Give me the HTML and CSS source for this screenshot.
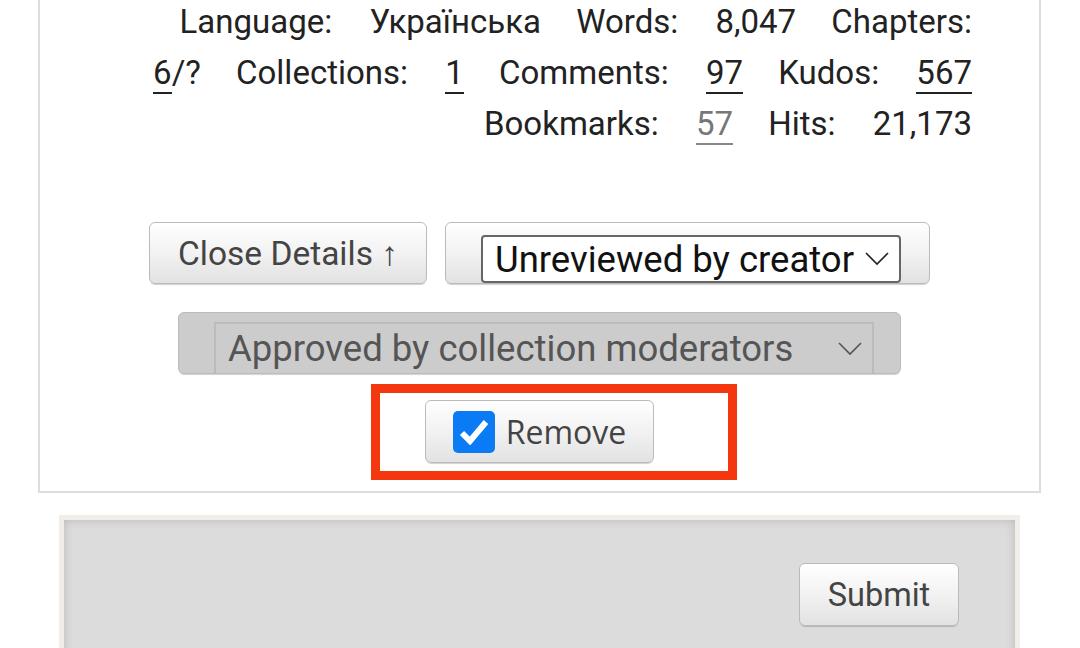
FILE: index.html
```html
<!DOCTYPE html>
<html lang="en">
<head>
  <meta charset="UTF-8">
  <meta name="viewport" content="width=device-width, initial-scale=1.0">
  <title>Approve works</title>
  <link rel="stylesheet" href="styles.css">
</head>
<body>
  <!-- work blurb -->
  <div class="blurb">
    <dl class="stats">
      <dt>Language:</dt> <dd>Українська</dd>
      <dt>Words:</dt> <dd>8,047</dd>
      <dt>Chapters:</dt> <dd><a href="#">6</a>/?</dd>
      <dt>Collections:</dt> <dd><a href="#">1</a></dd>
      <dt>Comments:</dt> <dd><a href="#">97</a></dd>
      <dt>Kudos:</dt> <dd><a href="#">567</a></dd>
      <dt>Bookmarks:</dt> <dd><a href="#" class="muted">57</a></dd>
      <dt>Hits:</dt> <dd>21,173</dd>
    </dl>

    <ul class="actions">
      <li class="row">
        <button class="btn">Close Details ↑</button>
        <div class="btn btn-select">
          <span class="select">
            <select>
              <option>Unreviewed by creator</option>
            </select>
            <svg class="chevron" width="24" height="14" viewBox="0 0 24 14"><path d="M1 1 L12 12 L23 1" fill="none" stroke="#222" stroke-width="1.6"/></svg>
          </span>
        </div>
      </li>
      <li class="row">
        <div class="btn btn-select disabled">
          <span class="select">
            <select disabled>
              <option>Approved by collection moderators</option>
            </select>
            <svg class="chevron" width="24" height="14" viewBox="0 0 24 14"><path d="M1 1 L12 12 L23 1" fill="none" stroke="#555" stroke-width="1.6"/></svg>
          </span>
        </div>
      </li>
      <li class="row">
        <div class="highlight">
          <label class="btn btn-remove">
            <span class="checkbox">
              <svg width="30" height="26" viewBox="0 0 30 26"><path d="M3 14 L11 22 L27 3" fill="none" stroke="#fff" stroke-width="6"/></svg>
            </span>
            Remove
          </label>
        </div>
      </li>
    </ul>
  </div>

  <!-- submit -->
  <div class="submit-box">
    <div class="submit-inner">
      <button class="btn btn-submit">Submit</button>
    </div>
  </div>
</body>
</html>
```

FILE: styles.css
```css
* {
  margin: 0;
  padding: 0;
  box-sizing: border-box;
}

body {
  font-family: Roboto, "Noto Sans", sans-serif;
  background-color: #fff;
  color: #222;
  overflow: hidden;
}

/* 작품 블럽 */
.blurb {
  margin: 0 39px 0 38px;
  border: 2px solid #ddd;
  border-top: none;
  padding: 0 67px 11px 50px;
}

.stats {
  margin-top: -4px;
  text-align: right;
  font-size: 33px;
  line-height: 51px;
}

.stats dt,
.stats dd {
  display: inline;
}

.stats dt {
  margin-left: 27px;
}

.stats dd {
  margin-left: 29px;
}

.stats a {
  color: #222;
  text-decoration: none;
  border-bottom: 2px solid #222;
}

.stats a.muted {
  color: #777;
  border-bottom-color: #888;
}

/* 버튼 영역 */
.actions {
  list-style: none;
  margin: 73px -67px 0 -50px;
}

.row {
  display: flex;
  justify-content: center;
  gap: 18px;
}

.row + .row {
  margin-top: 28px;
}

.row + .row + .row {
  margin-top: 10px;
}

.btn {
  font-family: Roboto, sans-serif;
  font-size: 33.5px;
  color: #444;
  height: 62px;
  padding: 0 28px;
  border: 1px solid #bbb;
  border-radius: 6px;
  background: linear-gradient(#fff 0%, #f2f2f2 50%, #e2e2e2 100%);
  box-shadow: 0 2px 1px -1px rgba(0, 0, 0, 0.18);
  display: flex;
  align-items: center;
}

.btn-select {
  align-items: flex-end;
  padding: 0 28px 0 35px;
}

.select {
  display: flex;
  align-items: center;
  height: 48px;
  background: #fff;
  border: 2px solid #666;
  border-radius: 4px;
  padding: 0 10px 0 12px;
}

.select select {
  appearance: none;
  -webkit-appearance: none;
  border: none;
  background: transparent;
  font-family: Roboto, sans-serif;
  font-size: 36.5px;
  color: #111;
  margin-right: 10px;
  outline: none;
}

.chevron {
  display: block;
}

.btn-select.disabled {
  width: 723px;
  height: 62px;
  background: #ccc;
  border-color: #bbb;
  padding: 0 26px 0 35px;
}

.btn-select.disabled .select {
  width: 100%;
  height: 51px;
  background: #ccc;
  border: 2px solid #bbb;
  border-bottom: none;
  border-radius: 0;
  padding: 0 10px 0 12px;
  justify-content: space-between;
}

.btn-select.disabled select {
  color: #555;
  opacity: 1;
}

/* 빨간 강조 박스 */
.highlight {
  margin-left: 29px;
  border: 9px solid #f4370f;
  padding: 7px 74px 8px 45px;
  background: #fff;
}

.btn-remove {
  font-family: "Open Sans", sans-serif;
  font-size: 32px;
  height: 63px;
  padding: 0 27px;
  gap: 11px;
  cursor: pointer;
}

.checkbox {
  width: 42px;
  height: 42px;
  background: #0a7bf5;
  border-radius: 5px;
  display: flex;
  align-items: center;
  justify-content: center;
}

/* 제출 영역 */
.submit-box {
  margin: 22px 60px 0 59px;
  border: 5px solid #f1eee9;
  border-bottom: none;
}

.submit-inner {
  background: #dcdcdc;
  box-shadow: inset 0 0 10px rgba(0, 0, 0, 0.16);
  height: 200px;
  padding: 43px 56px 0 0;
  display: flex;
  justify-content: flex-end;
  align-items: flex-start;
}

.btn-submit {
  height: 63px;
  width: 160px;
  justify-content: center;
  padding: 0;
  font-size: 32.5px;
}
```
